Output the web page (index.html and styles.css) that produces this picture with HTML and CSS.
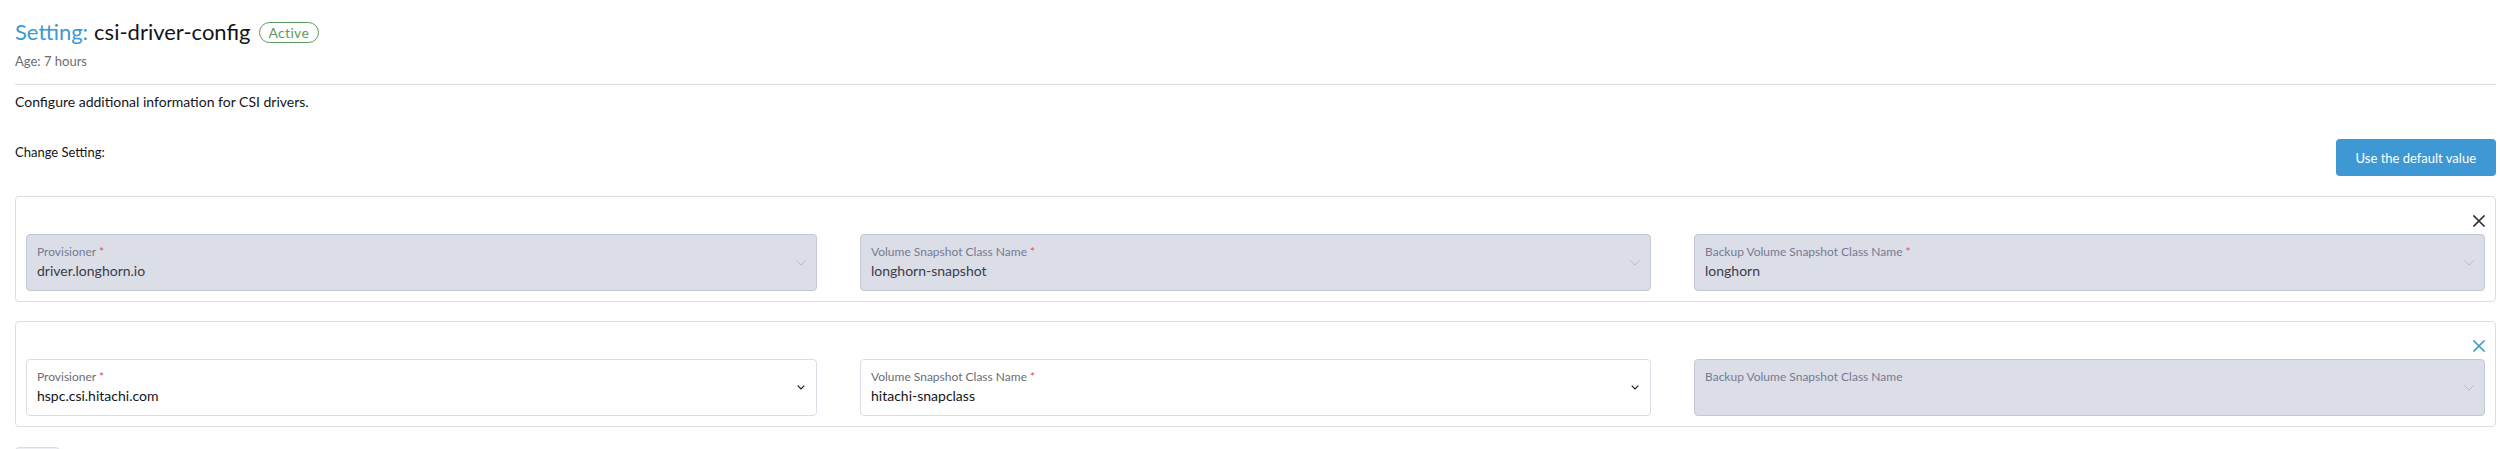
FILE: index.html
```html
<!DOCTYPE html>
<html lang="en">
<head>
<meta charset="utf-8">
<title>Setting: csi-driver-config</title>
<link rel="stylesheet" href="styles.css">
</head>
<body>
<div class="page">
  <header class="masthead">
    <h1 class="title"><span class="type">Setting:</span> <span class="name">csi-driver-config</span><span class="badge">Active</span></h1>
    <div class="age">Age: 7 hours</div>
  </header>

  <p class="description">Configure additional information for CSI drivers.</p>

  <div class="change-row">
    <span class="change-label">Change Setting:</span>
    <button class="btn-primary" type="button">Use the default value</button>
  </div>

  <div class="groups">
    <section class="group">
      <div class="group-head">
        <button class="remove" type="button" aria-label="Remove">
          <svg viewBox="0 0 12 12" width="12" height="12"><path d="M1 1 L11 11 M11 1 L1 11" stroke="currentColor" stroke-width="1.6" fill="none" stroke-linecap="square"/></svg>
        </button>
      </div>
      <div class="fields">
        <div class="field disabled">
          <div class="field-text">
            <span class="field-label">Provisioner <span class="req">*</span></span>
            <span class="field-value">driver.longhorn.io</span>
          </div>
          <svg class="chev" viewBox="0 0 10 6" width="10" height="6"><path d="M0.5 0.5 L5 5 L9.5 0.5" fill="none" stroke="currentColor" stroke-width="1"/></svg>
        </div>
        <div class="field disabled">
          <div class="field-text">
            <span class="field-label">Volume Snapshot Class Name <span class="req">*</span></span>
            <span class="field-value">longhorn-snapshot</span>
          </div>
          <svg class="chev" viewBox="0 0 10 6" width="10" height="6"><path d="M0.5 0.5 L5 5 L9.5 0.5" fill="none" stroke="currentColor" stroke-width="1"/></svg>
        </div>
        <div class="field disabled">
          <div class="field-text">
            <span class="field-label">Backup Volume Snapshot Class Name <span class="req">*</span></span>
            <span class="field-value">longhorn</span>
          </div>
          <svg class="chev" viewBox="0 0 10 6" width="10" height="6"><path d="M0.5 0.5 L5 5 L9.5 0.5" fill="none" stroke="currentColor" stroke-width="1"/></svg>
        </div>
      </div>
    </section>

    <section class="group">
      <div class="group-head">
        <button class="remove active" type="button" aria-label="Remove">
          <svg viewBox="0 0 12 12" width="12" height="12"><path d="M1 1 L11 11 M11 1 L1 11" stroke="currentColor" stroke-width="1.6" fill="none" stroke-linecap="square"/></svg>
        </button>
      </div>
      <div class="fields">
        <div class="field">
          <div class="field-text">
            <span class="field-label">Provisioner <span class="req">*</span></span>
            <span class="field-value">hspc.csi.hitachi.com</span>
          </div>
          <svg class="chev dark" viewBox="0 0 8 5" width="8" height="5"><path d="M0.7 0.7 L4 4 L7.3 0.7" fill="none" stroke="currentColor" stroke-width="1.1"/></svg>
        </div>
        <div class="field">
          <div class="field-text">
            <span class="field-label">Volume Snapshot Class Name <span class="req">*</span></span>
            <span class="field-value">hitachi-snapclass</span>
          </div>
          <svg class="chev dark" viewBox="0 0 8 5" width="8" height="5"><path d="M0.7 0.7 L4 4 L7.3 0.7" fill="none" stroke="currentColor" stroke-width="1.1"/></svg>
        </div>
        <div class="field disabled">
          <div class="field-text">
            <span class="field-label">Backup Volume Snapshot Class Name</span>
            <span class="field-value">&nbsp;</span>
          </div>
          <svg class="chev" viewBox="0 0 10 6" width="10" height="6"><path d="M0.5 0.5 L5 5 L9.5 0.5" fill="none" stroke="currentColor" stroke-width="1"/></svg>
        </div>
      </div>
    </section>
  </div>

  <button class="btn-add" type="button">Add</button>
</div>
</body>
</html>
```

FILE: styles.css
```css
* { box-sizing: border-box; }

html, body {
  margin: 0;
  padding: 0;
  background: #ffffff;
}

body {
  font-family: Lato, "Open Sans", "Liberation Sans", sans-serif;
  color: #141419;
  overflow: hidden;
}

.page {
  padding: 17px 4px 0 15px;
}

.masthead {
  border-bottom: 1px solid #dcdee7;
  padding-bottom: 14px;
}

.title {
  margin: 0;
  font-size: 22px;
  font-weight: 400;
  line-height: 30px;
  display: flex;
  align-items: center;
}

.title .type {
  color: #3d98d3;
  margin-right: 6px;
}

.title .name {
  color: #141419;
}

.badge {
  margin-left: 8px;
  border: 1px solid #5d995d;
  color: #5d995d;
  border-radius: 11px;
  font-size: 14px;
  line-height: 19px;
  padding: 0 9px;
  letter-spacing: 0.3px;
}

.age {
  margin-top: 5px;
  font-size: 13px;
  line-height: 18px;
  color: #6c6c76;
}

.description {
  margin: 7px 0 0;
  font-size: 14px;
  line-height: 20px;
  color: #141419;
}

.change-row {
  margin-top: 27px;
  display: flex;
  justify-content: space-between;
  align-items: flex-start;
}

.change-label {
  margin-top: 4px;
  font-size: 13px;
  line-height: 18px;
  color: #141419;
}

.btn-primary {
  height: 37px;
  padding: 0 20px;
  border: 0;
  border-radius: 4px;
  background: #3d98d3;
  color: #ffffff;
  font-family: inherit;
  font-size: 13px;
  font-weight: 400;
  min-width: 159px;
}

.groups {
  margin-top: 20px;
  display: flex;
  flex-direction: column;
  gap: 19px;
}

.group {
  border: 1px solid #dcdee7;
  border-radius: 4px;
  padding: 10px;
}

.group-head {
  height: 27px;
  display: flex;
  justify-content: flex-end;
  align-items: center;
}

.remove {
  border: 0;
  background: none;
  padding: 0;
  width: 12px;
  height: 12px;
  color: #2d2f38;
  display: flex;
}

.remove.active {
  color: #3d98d3;
}

.fields {
  display: grid;
  grid-template-columns: 1fr 1fr 1fr;
  gap: 43px;
}

.field {
  height: 57px;
  border: 1px solid #dcdee7;
  border-radius: 4px;
  background: #ffffff;
  padding: 9px 10px 0 10px;
  display: flex;
  align-items: flex-start;
  justify-content: space-between;
}

.field.disabled {
  background: #dcdee7;
  border-color: #c4c7d4;
}

.field-text {
  display: flex;
  flex-direction: column;
}

.field-label {
  font-size: 12px;
  line-height: 16px;
  color: #6c6c76;
}

.field.disabled .field-label {
  color: #767a93;
}

.req {
  color: #f64747;
}

.field-value {
  margin-top: 1px;
  font-size: 14px;
  line-height: 20px;
  color: #141419;
}

.field.disabled .field-value {
  color: #3a3c48;
}

.chev {
  align-self: center;
  margin-top: -9px;
  color: #b6b9c8;
}

.chev.dark {
  color: #141419;
  margin-right: 1px;
}

.btn-add {
  margin-top: 20px;
  height: 40px;
  padding: 0 10px;
  border: 1px solid #dcdee7;
  border-radius: 4px;
  background: #eeeff4;
  font-family: inherit;
  font-size: 13px;
  color: #141419;
}
```
